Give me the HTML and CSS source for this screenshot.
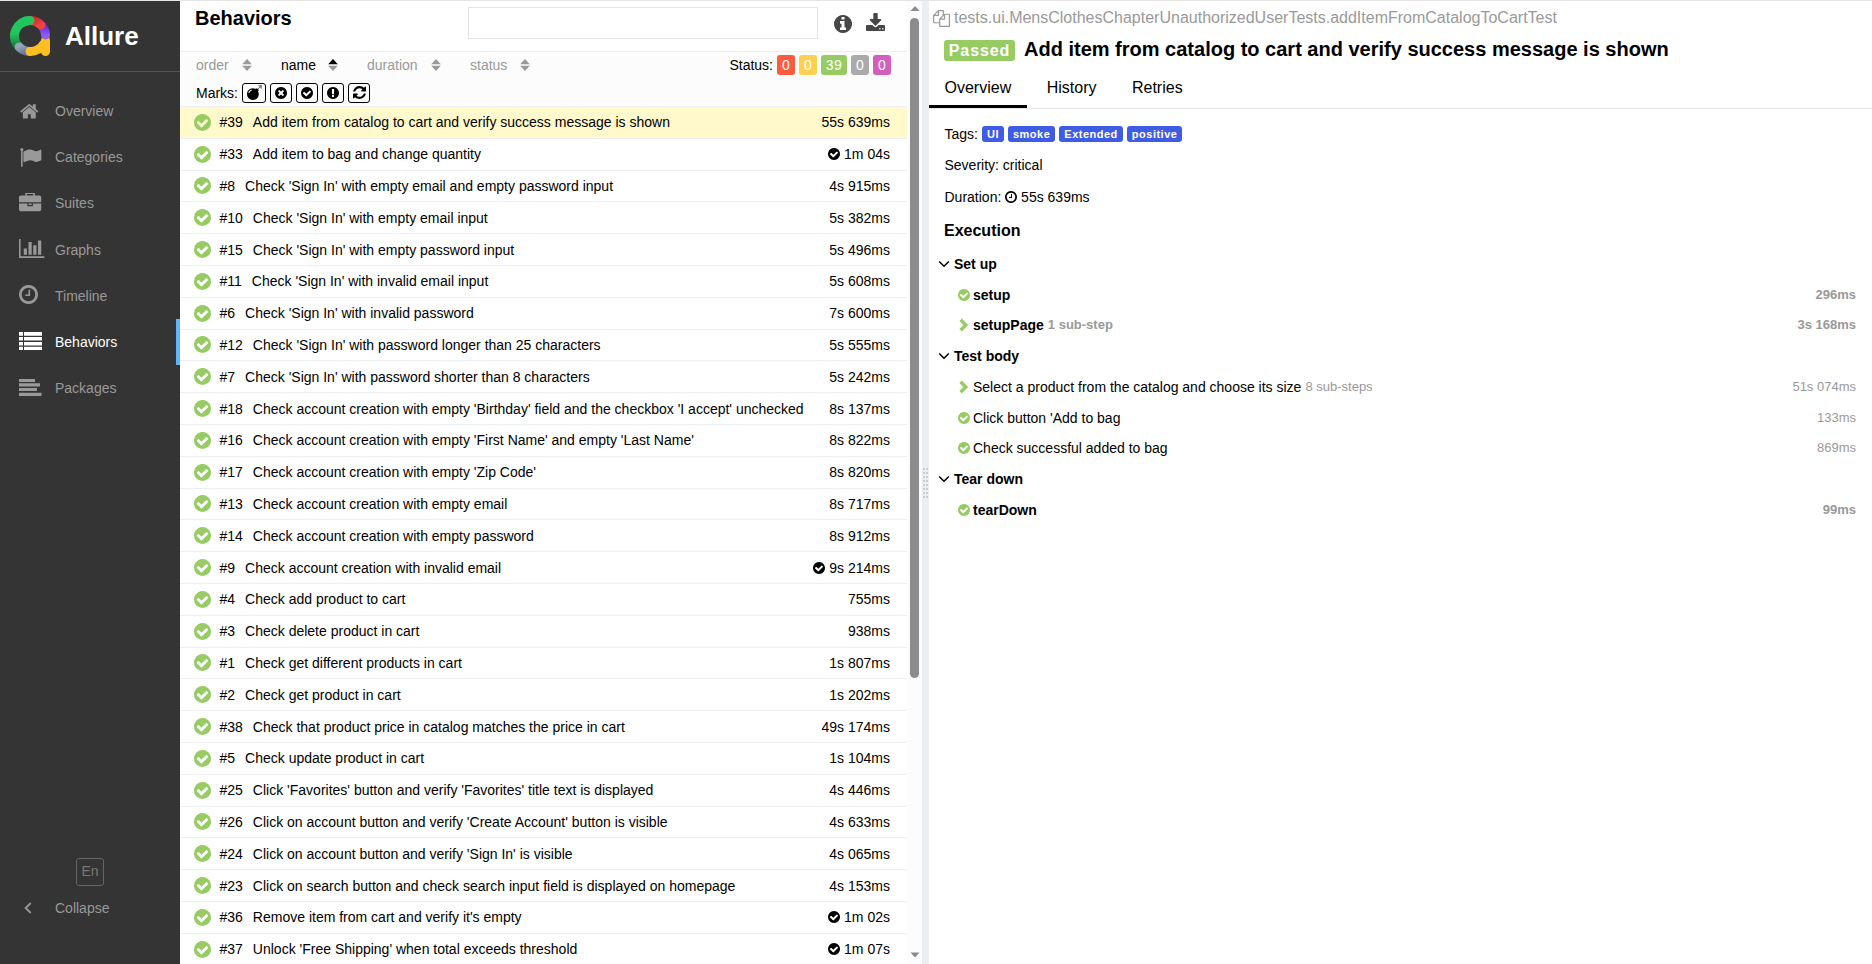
FILE: index.html
```
<!DOCTYPE html>
<html lang="en">
<head>
<meta charset="utf-8">
<title>Allure Report</title>
<link rel="stylesheet" href="styles.css">
</head>
<body>
<svg class="sprite" width="0" height="0" aria-hidden="true">
<symbol id="check" viewBox="128 128 1536 1536"><path d="M1412 734q0-28-18-46l-91-90q-19-19-45-19t-45 19l-408 407-226-226q-19-19-45-19t-45 19l-91 90q-18 18-18 46 0 27 18 45l362 362q19 19 45 19 27 0 46-19l543-543q18-18 18-45zm252 162q0 209-103 385.500t-279.500 279.500-385.500 103-385.500-103-279.500-279.500-103-385.500 103-385.500 279.500-279.500 385.500-103 385.500 103 279.500 279.500 103 385.500z"/></symbol>
<symbol id="times" viewBox="128 128 1536 1536"><path d="M1277 1122q0-26-19-45l-181-181 181-181q19-19 19-45 0-27-19-46l-90-90q-19-19-46-19-26 0-45 19l-181 181-181-181q-19-19-45-19-27 0-46 19l-90 90q-19 19-19 46 0 26 19 45l181 181-181 181q-19 19-19 45 0 27 19 46l90 90q19 19 46 19 26 0 45-19l181-181 181 181q19 19 45 19 27 0 46-19l90-90q19-19 19-46zm387-226q0 209-103 385.500t-279.500 279.500-385.500 103-385.500-103-279.500-279.500-103-385.500 103-385.500 279.500-279.500 385.500-103 385.500 103 279.500 279.500 103 385.500z"/></symbol>
<symbol id="excl" viewBox="128 128 1536 1536"><path d="M896 128q209 0 385.500 103t279.500 279.500 103 385.500-103 385.500-279.500 279.500-385.500 103-385.500-103-279.500-279.500-103-385.500 103-385.500 279.500-279.500 385.500-103zm128 1247v-190q0-14-9-23.500t-22-9.500h-192q-13 0-23 10t-10 23v190q0 13 10 23t23 10h192q13 0 22-9.500t9-23.500zm-2-344l18-621q0-12-10-18-10-8-24-8h-220q-14 0-24 8-10 6-10 18l17 621q0 10 10 17.500t24 7.500h185q14 0 23.500-7.500t10.500-17.500z"/></symbol>
<symbol id="info" viewBox="128 128 1536 1536"><path d="M1152 1376v-160q0-14-9-23t-23-9h-96v-512q0-14-9-23t-23-9h-320q-14 0-23 9t-9 23v160q0 14 9 23t23 9h96v320h-96q-14 0-23 9t-9 23v160q0 14 9 23t23 9h448q14 0 23-9t9-23zm-128-896v-160q0-14-9-23t-23-9h-192q-14 0-23 9t-9 23v160q0 14 9 23t23 9h192q14 0 23-9t9-23zm640 416q0 209-103 385.500t-279.500 279.500-385.500 103-385.500-103-279.500-279.500-103-385.500 103-385.500 279.500-279.500 385.500-103 385.500 103 279.500 279.500 103 385.500z"/></symbol>
<symbol id="refresh" viewBox="128 128 1536 1536"><path d="M1639 1056q0 5-1 7-64 268-268 434.500t-478 166.500q-146 0-282.500-55t-243.500-157l-129 129q-19 19-45 19t-45-19-19-45v-448q0-26 19-45t45-19h448q26 0 45 19t19 45-19 45l-137 137q71 66 161 102t187 36q134 0 250-65t186-179q11-17 53-117 8-23 30-23h192q13 0 22.500 9.500t9.500 22.500zm25-800v448q0 26-19 45t-45 19h-448q-26 0-45-19t-19-45 19-45l138-138q-148-137-349-137-134 0-250 65t-186 179q-11 17-53 117-8 23-30 23h-199q-13 0-22.500-9.500t-9.500-22.500v-7q65-268 270-434.500t480-166.500q146 0 284 55.500t245 156.500l130-129q19-19 45-19t45 19 19 45z"/></symbol>
<symbol id="bomb" viewBox="0 0 1792 1792"><path d="M571 589q-10-25-34-35t-49 0q-108 44-191 127t-127 191q-10 25 0 49t35 34q13 5 24 5 42 0 60-40 34-84 98.500-148.500t148.500-98.500q25-11 35-35t0-49zm942-356l46 46-244 243 68 68q19 19 19 45.500t-19 45.500l-64 64q89 161 89 343 0 143-55.500 273.500t-150 225-225 150-273.500 55.500-273.500-55.500-225-150-150-225-55.500-273.500 55.500-273.500 150-225 225-150 273.500-55.500q182 0 343 89l64-64q19-19 45.500-19t45.500 19l68 68zm8-56q-10 10-22 10-13 0-23-10l-91-90q-9-10-9-23t9-23q10-9 23-9t23 9l90 91q10 9 10 22.500t-10 22.500zm230 230q-11 9-23 9t-23-9l-90-91q-10-9-10-22.500t10-22.500q9-10 22.500-10t22.500 10l91 90q9 10 9 23t-9 23zm41-183q0 14-9 23t-23 9h-96q-14 0-23-9t-9-23 9-23 23-9h96q14 0 23 9t9 23zm-192-192v96q0 14-9 23t-23 9-23-9-9-23v-96q0-14 9-23t23-9 23 9 9 23zm151 55l-91 90q-10 10-22 10-13 0-23-10-10-9-10-22.500t10-22.500l90-91q10-9 23-9t23 9q9 10 9 23t-9 23z"/></symbol>
<symbol id="clock" viewBox="128 128 1536 1536"><path d="M1024 544v448q0 14-9 23t-23 9h-320q-14 0-23-9t-9-23v-64q0-14 9-23t23-9h224v-352q0-14 9-23t23-9h64q14 0 23 9t9 23zm416 352q0-148-73-273t-198-198-273-73-273 73-198 198-73 273 73 273 198 198 273 73 273-73 198-198 73-273zm224 0q0 209-103 385.500t-279.500 279.500-385.500 103-385.500-103-279.500-279.500-103-385.500 103-385.500 279.500-279.500 385.500-103 385.500 103 279.500 279.500 103 385.500z"/></symbol>
<symbol id="sort" viewBox="0 0 10 14"><path class="up" d="M5 1 9.800 6.200H.2z"/><path class="down" d="M5 13 9.800 7.800H.2z"/></symbol>
<symbol id="down" viewBox="0 0 12 8"><path d="M1.200 1.500 6 6.200l4.800-4.700" fill="none" stroke="currentColor" stroke-width="1.600"/></symbol>
<symbol id="right" viewBox="0 0 10 14"><path d="M1.600 1.800L6.800 7l-5.200 5.200" fill="none" stroke="currentColor" stroke-width="3.400"/></symbol>
</svg>
<div class="app">
<nav class="side">
  <div class="brand">
    <svg width="40" height="40" viewBox="0 0 40 40" fill="none" stroke-width="9" stroke-linecap="round">
      <defs>
        <linearGradient id="gg" x1="0" y1="0" x2="0" y2="1"><stop offset=".5" stop-color="#22c55e"/><stop offset="1" stop-color="#15803d"/></linearGradient>
        <linearGradient id="gr" x1="0" y1="0" x2="1" y2="1"><stop offset="0" stop-color="#dc2626"/><stop offset="1" stop-color="#ef4444"/></linearGradient>
        <linearGradient id="gp" x1="0" y1="0" x2="0" y2="1"><stop offset="0" stop-color="#6d28d9"/><stop offset="1" stop-color="#8b5cf6"/></linearGradient>
        <linearGradient id="gs" x1="0" y1="0" x2="1" y2="1"><stop offset="0" stop-color="#94a3b8"/><stop offset="1" stop-color="#64748b"/></linearGradient>
      </defs>
      <path stroke="url(#gg)" d="M8.500 30.400A15.500 15.500 0 0 1 20 4.500"/>
      <path stroke="url(#gs)" d="M9.200 31a15.500 15.500 0 0 0 10.800 4.500"/>
      <path stroke="#fbbf24" d="M20 35.500c6 0 11-3 14-8"/>
      <path stroke="#fbbf24" d="M35.500 24.500v11"/>
      <path stroke="url(#gp)" d="M32 10a15.500 15.500 0 0 1 3.500 9"/>
      <path stroke="url(#gr)" d="M20 4.500a15.500 15.500 0 0 1 11 4.600"/>
      <path stroke="#22c55e" d="M12 6.800a15.500 15.500 0 0 1 8-2.300"/>
    </svg>
    <span class="brand-name">Allure</span>
  </div>
  <div class="menu">
    <a class="item"><svg class="ico" width="26" height="20" viewBox="0 0 26 20"><path transform="translate(.3 .3) scale(.01116)" d="M1472 992v480q0 26-19 45t-45 19h-384v-384h-256v384h-384q-26 0-45-19t-19-45v-480q0-1 .5-3t.5-3l575-474 575 474q1 2 1 6zm223-69l-62 74q-8 9-21 11h-3q-13 0-21-7l-692-577-692 577q-12 8-24 7-13-2-21-11l-62-74q-8-10-7-23.500t11-21.500l719-599q32-26 76-26t76 26l244 204v-195q0-14 9-23t23-9h192q14 0 23 9t9 23v408l219 182q10 8 11 21.500t-7 23.500z"/></svg>Overview</a>
    <a class="item"><svg class="ico" width="26" height="20" viewBox="0 0 26 20"><path transform="translate(.5 -.5) scale(.0122)" d="M320 256q0 72-64 110v1266q0 13-9.500 22.500t-22.500 9.500h-64q-13 0-22.500-9.500t-9.500-22.500v-1266q-64-38-64-110 0-53 37.500-90.500t90.500-37.500 90.500 37.500 37.500 90.500zm1472 64v763q0 25-12.500 38.500t-39.500 27.500q-215 116-369 116-61 0-123.500-22t-108.500-48-115.500-48-142.500-22q-192 0-464 146-17 9-33 9-26 0-45-19t-19-45v-742q0-32 31-55 21-14 79-43 236-120 421-120 107 0 200 29t219 88q38 19 88 19 54 0 117.500-21t110-47 88-47 54.500-21q26 0 45 19t19 45z"/></svg>Categories</a>
    <a class="item"><svg class="ico" width="26" height="20" viewBox="0 0 26 20"><path transform="translate(0 -.7) scale(.0124)" d="M640 256h512v-128h-512v128zm1152 640v480q0 66-47 113t-113 47h-1472q-66 0-113-47t-47-113v-480h672v160q0 26 19 45t45 19h320q26 0 45-19t19-45v-160h672zm-768 0v128h-256v-128h256zm768-480v384h-1792v-384q0-66 47-113t113-47h352v-160q0-40 28-68t68-28h576q40 0 68 28t28 68v160h352q66 0 113 47t47 113z"/></svg>Suites</a>
    <a class="item"><svg class="ico" width="26" height="20" viewBox="0 0 26 20"><path transform="translate(0 -1.700) scale(.0124)" d="M640 896v512h-256v-512h256zm384-512v1024h-256v-1024h256zm1024 1152v128h-2048v-1536h128v1408h1920zm-640-896v768h-256v-768h256zm384-384v1152h-256v-1152h256z"/></svg>Graphs</a>
    <a class="item"><svg class="ico" width="26" height="20"><use href="#clock" x="0" y="0" width="19" height="19"/></svg>Timeline</a>
    <a class="item active"><svg class="ico" width="26" height="20" viewBox="0 0 26 20"><path d="M0 0h4v3.800H0zM5 0h18v3.800H5zM0 5h4v3.600H0zM5 5h18v3.600H5zM0 10h4v3.600H0zM5 10h18v3.600H5zM0 14.800h4v3.300H0zM5 14.800h18v3.300H5z"/></svg>Behaviors</a>
    <a class="item"><svg class="ico" width="26" height="20" viewBox="0 0 26 20"><path d="M0 1h16v3H0zM0 5.300h21v3.200H0zM0 10h18v3H0zM0 14.800h22.500v3.200H0z"/></svg>Packages</a>
  </div>
  <div class="foot">
    <span class="lang">En</span>
    <a class="collapse"><svg width="8" height="12" viewBox="0 0 8 12"><path d="M6.800 1 1.600 6l5.200 5" fill="none" stroke="currentColor" stroke-width="1.800"/></svg>Collapse</a>
  </div>
</nav>
<section class="list">
  <div class="list-main">
    <header class="list-head"><h1>Behaviors</h1><span class="search"></span><svg class="h-info" width="18" height="18"><use href="#info"/></svg><svg width="19" height="18" viewBox="64 0 1664 1536" preserveAspectRatio="none"><path d="M1344 1344q0-26-19-45t-45-19-45 19-19 45 19 45 45 19 45-19 19-45zm256 0q0-26-19-45t-45-19-45 19-19 45 19 45 45 19 45-19 19-45zm128-224v320q0 40-28 68t-68 28h-1472q-40 0-68-28t-28-68v-320q0-40 28-68t68-28h465l135 136q58 56 136 56t136-56l136-136h464q40 0 68 28t28 68zm-325-569q17 41-14 70l-448 448q-18 19-45 19t-45-19l-448-448q-31-29-14-70 17-39 59-39h256v-448q0-26 19-45t45-19h256q26 0 45 19t19 45v448h256q42 0 59 39z"/></svg></header>
    <div class="controls">
      <div class="sorts">
        <span class="sorter s1">order<svg width="10" height="14"><use href="#sort"/></svg></span>
        <span class="sorter s2 on">name<svg width="10" height="14" viewBox="0 0 10 14"><path fill="#000" d="M5 1 9.800 6.200H.2z"/><path fill="#999" d="M5 13 9.800 7.800H.2z"/></svg></span>
        <span class="sorter s3">duration<svg width="10" height="14"><use href="#sort"/></svg></span>
        <span class="sorter s4">status<svg width="10" height="14"><use href="#sort"/></svg></span>
        <div class="status">Status:<b class="chip red">0</b><b class="chip yellow">0</b><b class="chip green">39</b><b class="chip gray">0</b><b class="chip pink">0</b></div>
      </div>
      <div class="marks">Marks:<i class="mark wide"><svg width="15" height="15"><use href="#bomb"/></svg></i><i class="mark"><svg width="12" height="12"><use href="#times"/></svg></i><i class="mark"><svg width="12" height="12"><use href="#check"/></svg></i><i class="mark"><svg width="12" height="12"><use href="#excl"/></svg></i><i class="mark"><svg width="13" height="13"><use href="#refresh"/></svg></i></div>
    </div>
    <div class="rows">
      <div class="row sel"><svg class="ok"><use href="#check"/></svg><span class="n">#39</span><span class="t">Add item from catalog to cart and verify success message is shown</span><span class="d">55s 639ms</span></div>
      <div class="row"><svg class="ok"><use href="#check"/></svg><span class="n">#33</span><span class="t">Add item to bag and change quantity</span><svg class="new"><use href="#check"/></svg><span class="d">1m 04s</span></div>
      <div class="row"><svg class="ok"><use href="#check"/></svg><span class="n">#8</span><span class="t">Check 'Sign In' with empty email and empty password input</span><span class="d">4s 915ms</span></div>
      <div class="row"><svg class="ok"><use href="#check"/></svg><span class="n">#10</span><span class="t">Check 'Sign In' with empty email input</span><span class="d">5s 382ms</span></div>
      <div class="row"><svg class="ok"><use href="#check"/></svg><span class="n">#15</span><span class="t">Check 'Sign In' with empty password input</span><span class="d">5s 496ms</span></div>
      <div class="row"><svg class="ok"><use href="#check"/></svg><span class="n">#11</span><span class="t">Check 'Sign In' with invalid email input</span><span class="d">5s 608ms</span></div>
      <div class="row"><svg class="ok"><use href="#check"/></svg><span class="n">#6</span><span class="t">Check 'Sign In' with invalid password</span><span class="d">7s 600ms</span></div>
      <div class="row"><svg class="ok"><use href="#check"/></svg><span class="n">#12</span><span class="t">Check 'Sign In' with password longer than 25 characters</span><span class="d">5s 555ms</span></div>
      <div class="row"><svg class="ok"><use href="#check"/></svg><span class="n">#7</span><span class="t">Check 'Sign In' with password shorter than 8 characters</span><span class="d">5s 242ms</span></div>
      <div class="row"><svg class="ok"><use href="#check"/></svg><span class="n">#18</span><span class="t">Check account creation with empty 'Birthday' field and the checkbox 'I accept' unchecked</span><span class="d">8s 137ms</span></div>
      <div class="row"><svg class="ok"><use href="#check"/></svg><span class="n">#16</span><span class="t">Check account creation with empty 'First Name' and empty 'Last Name'</span><span class="d">8s 822ms</span></div>
      <div class="row"><svg class="ok"><use href="#check"/></svg><span class="n">#17</span><span class="t">Check account creation with empty 'Zip Code'</span><span class="d">8s 820ms</span></div>
      <div class="row"><svg class="ok"><use href="#check"/></svg><span class="n">#13</span><span class="t">Check account creation with empty email</span><span class="d">8s 717ms</span></div>
      <div class="row"><svg class="ok"><use href="#check"/></svg><span class="n">#14</span><span class="t">Check account creation with empty password</span><span class="d">8s 912ms</span></div>
      <div class="row"><svg class="ok"><use href="#check"/></svg><span class="n">#9</span><span class="t">Check account creation with invalid email</span><svg class="new"><use href="#check"/></svg><span class="d">9s 214ms</span></div>
      <div class="row"><svg class="ok"><use href="#check"/></svg><span class="n">#4</span><span class="t">Check add product to cart</span><span class="d">755ms</span></div>
      <div class="row"><svg class="ok"><use href="#check"/></svg><span class="n">#3</span><span class="t">Check delete product in cart</span><span class="d">938ms</span></div>
      <div class="row"><svg class="ok"><use href="#check"/></svg><span class="n">#1</span><span class="t">Check get different products in cart</span><span class="d">1s 807ms</span></div>
      <div class="row"><svg class="ok"><use href="#check"/></svg><span class="n">#2</span><span class="t">Check get product in cart</span><span class="d">1s 202ms</span></div>
      <div class="row"><svg class="ok"><use href="#check"/></svg><span class="n">#38</span><span class="t">Check that product price in catalog matches the price in cart</span><span class="d">49s 174ms</span></div>
      <div class="row"><svg class="ok"><use href="#check"/></svg><span class="n">#5</span><span class="t">Check update product in cart</span><span class="d">1s 104ms</span></div>
      <div class="row"><svg class="ok"><use href="#check"/></svg><span class="n">#25</span><span class="t">Click 'Favorites' button and verify 'Favorites' title text is displayed</span><span class="d">4s 446ms</span></div>
      <div class="row"><svg class="ok"><use href="#check"/></svg><span class="n">#26</span><span class="t">Click on account button and verify 'Create Account' button is visible</span><span class="d">4s 633ms</span></div>
      <div class="row"><svg class="ok"><use href="#check"/></svg><span class="n">#24</span><span class="t">Click on account button and verify 'Sign In' is visible</span><span class="d">4s 065ms</span></div>
      <div class="row"><svg class="ok"><use href="#check"/></svg><span class="n">#23</span><span class="t">Click on search button and check search input field is displayed on homepage</span><span class="d">4s 153ms</span></div>
      <div class="row"><svg class="ok"><use href="#check"/></svg><span class="n">#36</span><span class="t">Remove item from cart and verify it's empty</span><svg class="new"><use href="#check"/></svg><span class="d">1m 02s</span></div>
      <div class="row"><svg class="ok"><use href="#check"/></svg><span class="n">#37</span><span class="t">Unlock 'Free Shipping' when total exceeds threshold</span><svg class="new"><use href="#check"/></svg><span class="d">1m 07s</span></div>
    </div>
  </div>
  <div class="scroll"><svg width="10" height="6" viewBox="0 0 10 6"><path d="M5 0l4.500 5h-9z"/></svg><span class="thumb"></span><svg width="10" height="6" viewBox="0 0 10 6"><path d="M5 5.500L.5.500h9z"/></svg></div>
</section>
<div class="gutter"><svg width="5" height="30" viewBox="0 0 5 30"><path stroke="#ccc" stroke-width="2" stroke-dasharray="2 2" d="M1 0v30M4 0v30"/></svg></div>
<main class="detail">
  <div class="crumb"><svg width="17" height="17" viewBox="0 0 1792 1792"><path d="M1696 384q40 0 68 28t28 68v1216q0 40-28 68t-68 28h-960q-40 0-68-28t-28-68v-288h-544q-40 0-68-28t-28-68v-672q0-40 20-88t48-76l408-408q28-28 76-48t88-20h416q40 0 68 28t28 68v328q68-40 128-40h416zm-544 213l-299 299h299v-299zm-640-384l-299 299h299v-299zm196 647l316-316v-416h-384v416q0 40-28 68t-68 28h-416v640h512v-256q0-40 20-88t48-76zm956 804v-1152h-384v416q0 40-28 68t-68 28h-416v640h896z"/></svg><span>tests.ui.MensClothesChapterUnauthorizedUserTests.addItemFromCatalogToCartTest</span></div>
  <div class="title"><b class="passed">Passed</b><h2>Add item from catalog to cart and verify success message is shown</h2></div>
  <div class="tabs"><a class="tab cur">Overview</a><a class="tab">History</a><a class="tab">Retries</a></div>
  <div class="meta tags">Tags:<b class="tag">UI</b><b class="tag">smoke</b><b class="tag">Extended</b><b class="tag">positive</b></div>
  <div class="meta">Severity: critical</div>
  <div class="meta">Duration:&nbsp;<svg width="12" height="12"><use href="#clock"/></svg>&nbsp;55s 639ms</div>
  <h3>Execution</h3>
  <div class="group"><svg width="12" height="8"><use href="#down"/></svg>Set up</div>
  <div class="step bold"><svg class="st"><use href="#check"/></svg><span>setup</span><span class="sd">296ms</span></div>
  <div class="step bold"><svg class="ch"><use href="#right"/></svg><span>setupPage</span><span class="sub">1 sub-step</span><span class="sd">3s 168ms</span></div>
  <div class="group"><svg width="12" height="8"><use href="#down"/></svg>Test body</div>
  <div class="step"><svg class="ch"><use href="#right"/></svg><span>Select a product from the catalog and choose its size</span><span class="sub">8 sub-steps</span><span class="sd">51s 074ms</span></div>
  <div class="step"><svg class="st"><use href="#check"/></svg><span>Click button 'Add to bag</span><span class="sd">133ms</span></div>
  <div class="step"><svg class="st"><use href="#check"/></svg><span>Check successful added to bag</span><span class="sd">869ms</span></div>
  <div class="group"><svg width="12" height="8"><use href="#down"/></svg>Tear down</div>
  <div class="step bold"><svg class="st"><use href="#check"/></svg><span>tearDown</span><span class="sd">99ms</span></div>
</main>
</div>
</body>
</html>
```
FILE: styles.css
```
* { box-sizing: border-box; }
body { margin: 0; background: #fff; color: #000; font: 14px/20px "Liberation Sans", Arial, sans-serif; }
svg { fill: currentColor; flex: none; display: block; }
.sprite { position: absolute; }
h1, h2, h3 { margin: 0; font-weight: bold; }
.app { display: flex; height: 964px; overflow: hidden; border-top: 1px solid #e5e5e5; }

.side { width: 180px; flex: none; margin-top: -1px; background: #343434; color: #999; display: flex; flex-direction: column; }
.brand { height: 72px; border-bottom: 1px solid #555; padding-left: 10px; display: flex; align-items: center; gap: 15px; }
.brand svg { fill: none; }
.brand-name { font: bold 26px/30px "Liberation Sans", Arial, sans-serif; color: #fff; }
.menu { padding-top: 16px; }
.item { display: flex; align-items: center; height: 46.200px; padding-left: 19px; border-right: 4px solid transparent; }
.ico { margin: -1px 10px 0 0; }
.active { color: #fff; border-right-color: #64b5f6; }
.foot { margin-top: auto; height: 106px; display: flex; flex-direction: column; }
.lang { align-self: center; width: 28px; height: 28px; border: 1px solid #666; border-radius: 3px; color: #777; text-align: center; line-height: 25px; }
.collapse { display: flex; align-items: center; gap: 23px; padding-left: 24px; margin-top: 12px; }

.list { width: 742px; flex: none; display: flex; overflow: hidden; }
.list-main { width: 727px; flex: none; }
.list-head { height: 50px; display: flex; padding: 6px 22px 0 15px; color: #474747; }
.list-head h1 { width: 273px; margin-top: -1px; font-size: 20px; line-height: 24px; color: #000; }
.search { width: 350px; height: 32px; border: 1px solid #e5e5e5; }
.list-head svg { margin-top: 6px; }
.list-head .h-info { margin: 8px 14px 0 16px; }
.controls { height: 56px; border: solid #eceff1; border-width: 1px 0; background: #fcfcfc; }
.sorts { display: flex; height: 26px; padding: 0 16px; align-items: center; color: #999; }
.sorter { display: flex; justify-content: space-between; align-items: center; }
.s1 { width: 56px; margin-right: 29px; }
.s2 { width: 57px; margin-right: 29px; }
.s3 { width: 74px; margin-right: 29px; }
.s4 { width: 60px; }
.on, .status { color: #000; }
.status { margin-left: auto; display: flex; align-items: center; gap: 4px; }
.chip { width: 18px; height: 20px; border-radius: 3px; color: #fff; font-weight: normal; text-align: center; }
.red { background: #fd5a3e; }
.yellow { background: #ffd050; }
.green { width: 26px; background: #97cc64; letter-spacing: .5px; }
.gray { background: #aaa; }
.pink { background: #d35ebe; }
.marks { display: flex; height: 27px; padding: 2px 16px 0; align-items: center; }
.mark { width: 22px; height: 20px; border: 1px solid #000; border-radius: 3px; margin-left: 4px; display: flex; align-items: center; justify-content: center; }
.mark.wide { width: 24px; margin-left: 4px; }
.row { display: flex; align-items: center; height: 31.800px; border-bottom: 1px solid #eceff1; padding: 0 17px 0 14px; white-space: nowrap; }
.ok { width: 17px; height: 17px; color: #97cc64; margin-right: 8.500px; }
.sel { background: #fff9cc; }
.n { margin-right: 10px; }
.t { flex: 1; }
.new { width: 12px; height: 12px; margin-right: 4px; }
.scroll { width: 15px; background: #fcfcfc; color: #8b8b8b; display: flex; flex-direction: column; align-items: center; padding: 5px 0 6px; }
.thumb { width: 9px; height: 660px; border-radius: 5px; background: #8b8b8b; margin: 6px 0 auto; }
.gutter { width: 7px; flex: none; background: #eceff1; display: flex; align-items: center; justify-content: center; }

.detail { flex: 1; white-space: nowrap; }
.crumb { display: flex; align-items: center; height: 33px; padding: 1px 0 0 4px; gap: 4px; font-size: 16px; color: #999; }
.title { display: flex; align-items: center; height: 30px; padding-left: 15px; gap: 9px; }
.passed { width: 71px; height: 21px; text-align: center; border-radius: 3px; background: #97cc64; color: #fff; font-size: 16px; line-height: 21px; letter-spacing: .9px; margin-top: 3px; }
.title h2 { font-size: 20px; line-height: 24px; }
.tabs { display: flex; gap: 4px; height: 45px; border-bottom: 1px solid #e5e5e5; font-size: 16px; }
.tab { padding: 14px 16px 0 15.500px; height: 44px; }
.cur { border-bottom: 3px solid #000; }
.meta { display: flex; align-items: center; height: 31.500px; padding-left: 15.500px; }
.tags { margin-top: 9px; }
.tag { height: 16px; padding: 0 5px; margin-left: 4px; border-radius: 3px; background: #3f5ce5; color: #fff; font-size: 11px; line-height: 16px; letter-spacing: .5px; }
h3 { padding: 1px 0 0 15px; font-size: 16px; line-height: 34px; }
.group { display: flex; align-items: center; height: 30.750px; padding-left: 9px; gap: 4px; font-weight: bold; }
h3 + .group { margin-top: 1px; }
.step { display: flex; align-items: center; height: 30.750px; padding: 0 16px 0 29px; }
.bold { font-weight: bold; }
.st { width: 12px; height: 12px; color: #97cc64; margin: 0 3px 0 0; }
.ch { width: 10px; height: 14px; color: #97cc64; margin: 0 4px 0 1px; }
.sub, .sd { color: #999; font-size: 13px; }
.sub { margin-left: 4px; }
.sd { margin-left: auto; }
```
